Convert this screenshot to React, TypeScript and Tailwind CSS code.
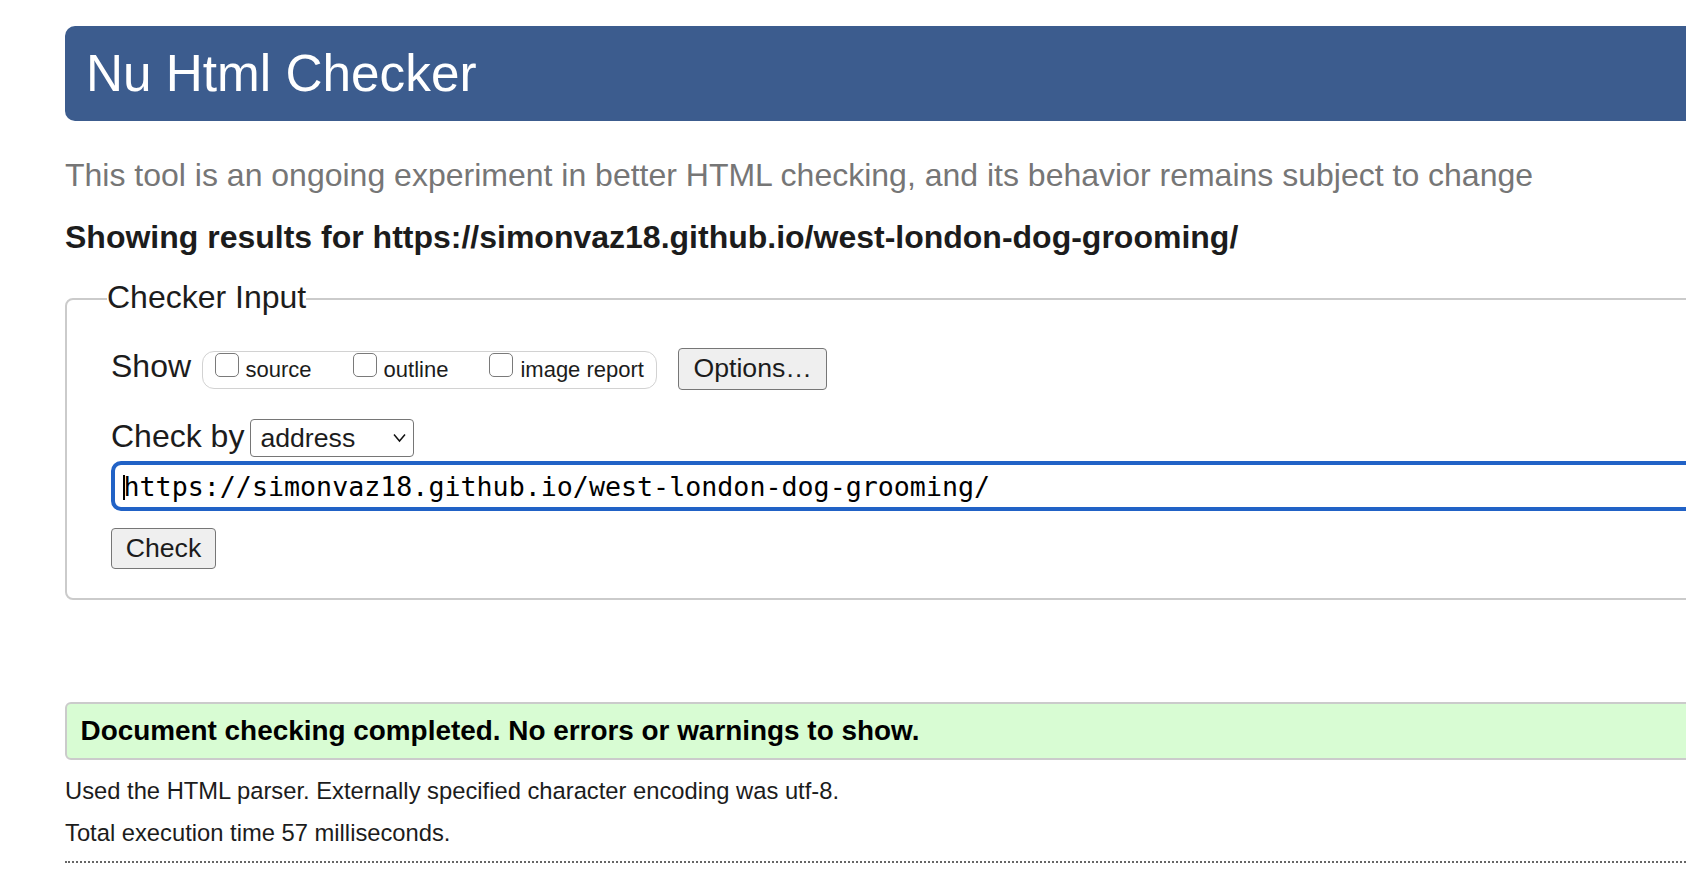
import { useState } from "react"

const showOptions = [
  { id: "source", label: "source", ml: "" },
  { id: "outline", label: "outline", ml: "ml-[41px]" },
  { id: "image", label: "image report", ml: "ml-[41px]" },
]

function Checkbox({ checked, onChange }: { checked: boolean; onChange: () => void }) {
  return (
    <span
      onClick={onChange}
      className="inline-block w-[24px] h-[24.5px] rounded-[5px] border-[1.5px] border-[#7a7a7a] bg-white shrink-0"
    >
      {checked && (
        <svg viewBox="0 0 24 24" className="w-full h-full">
          <path d="M5 12l4 4 9-9" fill="none" stroke="#222" strokeWidth="2.5" />
        </svg>
      )}
    </span>
  )
}

export default function App() {
  const [checked, setChecked] = useState<Record<string, boolean>>({})
  const url = "https://simonvaz18.github.io/west-london-dog-grooming/"

  return (
    <div className="w-[1686px] h-[886px] overflow-hidden bg-white text-[#1c1c1c] font-['Liberation_Sans',Arial,sans-serif]">
      <div className="w-[1800px] ml-[65px] pt-[26px]">
        {/* Title bar */}
        <div className="h-[95px] flex items-center pl-[21px] bg-[#3c5c8e] rounded-[10px]">
          <h1 className="text-[51.3px] leading-none text-white">Nu Html Checker</h1>
        </div>

        <p className="mt-[37.5px] text-[32px] leading-none text-[#767676]">
          This tool is an ongoing experiment in better HTML checking, and its behavior remains subject to change
        </p>

        <p className="mt-[30.3px] text-[32px] leading-none font-bold">Showing results for {url}</p>

        {/* Input form */}
        <fieldset className="mt-[27.8px] border-2 border-[#cbcbcb] rounded-[8px] pl-[40px] pt-[31px] pb-[29px]">
          <legend className="text-[32px] leading-none pb-[4px]">Checker Input</legend>
          <div className="pl-[4px]">
            <div className="flex items-baseline">
              <span className="text-[32px] leading-none">Show</span>
              <div className="ml-[11px] h-[37.5px] flex items-baseline pt-[0.5px] pl-[11.5px] pr-[12px] border-[1.5px] border-[#d2d2d2] rounded-[12px]">
                {showOptions.map((o) => (
                  <label key={o.id} className={`flex items-baseline ${o.ml}`}>
                    <Checkbox
                      checked={!!checked[o.id]}
                      onChange={() => setChecked((c) => ({ ...c, [o.id]: !c[o.id] }))}
                    />
                    <span className="ml-[7px] text-[22px] leading-none">{o.label}</span>
                  </label>
                ))}
              </div>
              <button className="ml-[21.5px] h-[42px] flex items-center px-[14px] bg-[#efefef] border-[1.5px] border-[#767676] rounded-[4px] text-[26.67px] leading-none">
                Options…
              </button>
            </div>

            <div className="mt-[29.5px] flex items-baseline">
              <span className="text-[32px] leading-none">Check by</span>
              <div className="ml-[6px] w-[164px] h-[37.7px] flex items-center justify-between pl-[9px] pr-[7px] bg-white border-[1.5px] border-[#767676] rounded-[4px]">
                <span className="text-[26.67px] leading-none">address</span>
                <svg width="13" height="10" viewBox="0 0 13 10">
                  <path d="M1 1.5L6.5 8L12 1.5" fill="none" stroke="#111" strokeWidth="1.5" />
                </svg>
              </div>
            </div>

            <div className="mt-[4.5px] h-[49.7px] flex items-center pl-[8px] pt-[3px] border-4 border-[#2162c6] rounded-[10px]">
              <span className="w-[2px] h-[25px] bg-black shrink-0" />
              <span className="-ml-[1.5px] text-[26.67px] leading-none font-['DejaVu_Sans_Mono',monospace] text-black">
                {url}
              </span>
            </div>

            <button className="mt-[17px] h-[41.3px] flex items-center px-[13.7px] bg-[#efefef] border-[1.5px] border-[#767676] rounded-[4px] text-[26.67px] leading-none">
              Check
            </button>
          </div>
        </fieldset>

        {/* Result */}
        <div className="mt-[102px] h-[58px] flex items-center pl-[13.5px] bg-[#d8fcd3] border-2 border-[#cbcbcb] rounded-[6px]">
          <p className="text-[27.9px] leading-none font-bold text-black">
            Document checking completed. No errors or warnings to show.
          </p>
        </div>

        <p className="mt-[18.7px] text-[23.75px] leading-none">
          Used the HTML parser. Externally specified character encoding was utf-8.
        </p>
        <p className="mt-[18px] text-[23.75px] leading-none">Total execution time 57 milliseconds.</p>

        <div className="mt-[16.3px] border-t-2 border-dotted border-[#666]" />
      </div>
    </div>
  )
}
